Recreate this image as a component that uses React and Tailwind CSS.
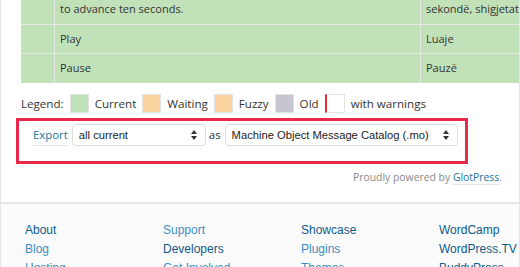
const rows = [
  { src: 'to advance ten seconds.', dst: 'sekondë, shigjetat', h: 'h-[29px]' },
  { src: 'Play', dst: 'Luaje', h: 'h-[28px]' },
  { src: 'Pause', dst: 'Pauzë', h: 'h-[29px]' },
];

const legend = [
  { label: 'Current', cls: 'bg-[#c1e1b9]' },
  { label: 'Waiting', cls: 'bg-[#fbd49f]' },
  { label: 'Fuzzy', cls: 'bg-[#fbd49f]' },
  { label: 'Old', cls: 'bg-[#c8c5d1]' },
];

const footer = [
  [['About', true], ['Blog', false], ['Hosting', false]],
  [['Support', false], ['Developers', true], ['Get Involved', false]],
  [['Showcase', true], ['Plugins', false], ['Themes', false]],
  [['WordCamp', true], ['WordPress.TV', true], ['BuddyPress', true]],
];

const Arrows = () => (
  <svg width="6" height="10" viewBox="0 0 6 10" className="shrink-0">
    <path d="M3 0L6 4H0Z" fill="#333" />
    <path d="M3 10L6 6H0Z" fill="#333" />
  </svg>
);

const Select = ({ value, width }) => (
  <div className={`${width} h-[22px] flex items-center justify-between pl-[6px] pr-[8px] bg-white border border-[#dcdcdc] rounded-[4px] font-['Liberation_Sans'] text-[11.2px] text-[#222]`}>
    <span>{value}</span>
    <Arrows />
  </div>
);

export default function App() {
  return (
    <div className="w-[520px] h-[267px] overflow-hidden bg-white border-x border-[#e5e5e5] font-['Open_Sans',sans-serif] text-[11px] text-[#333]">
      {/* Translation rows */}
      <div className="-mt-[5px] ml-[20px] flex flex-col gap-px bg-[#e6e9e5]">
        {rows.map((r) => (
          <div key={r.src} className={`${r.h} grid grid-cols-[33px_365px_1fr] gap-px`}>
            <div className="bg-[#c1e1b9]" />
            <div className="bg-[#c1e1b9] pl-[5px] flex items-center">{r.src}</div>
            <div className="bg-[#c1e1b9] pl-[5px] flex items-center whitespace-nowrap overflow-hidden">{r.dst}</div>
          </div>
        ))}
      </div>

      {/* Legend */}
      <div className="mt-[11px] ml-[20px] flex items-center gap-[6px] h-[19px] text-[11.6px]">
        <span>Legend:</span>
        {legend.map((l) => (
          <div key={l.label} className="flex items-center gap-[6px]">
            <span className={`w-[19px] h-[19px] border border-[#e2e2e2] ${l.cls}`} />
            <span>{l.label}</span>
          </div>
        ))}
        <span className="w-[20px] h-[19px] bg-white border border-[#e2e2e2] border-l-2 border-l-[#dc3232]" />
        <span>with warnings</span>
      </div>

      {/* Export */}
      <div className="mt-[5px] ml-[15px] w-[452px] border-[3px] border-[#e8294b] pt-[3px] pb-[15px] pl-[14px] flex items-center text-[11.4px]">
        <a className="text-[#21759b] border-b border-[#e3e3e3] leading-[21px]">Export</a>
        <div className="ml-[4px]">
          <Select value="all current" width="w-[134px]" />
        </div>
        <span className="ml-[3px] mr-[4px]">as</span>
        <Select value="Machine Object Message Catalog (.mo)" width="w-[233px]" />
      </div>

      <div className="mt-[5px] pr-[17px] text-right leading-[16px] text-[10.4px] text-[#8a8a8a]">
        Proudly powered by <a className="text-[#21759b] border-b border-[#e3e3e3]">GlotPress</a>.
      </div>

      <div className="mt-[17px] h-[2px] bg-[#e6e6e6]" />

      {/* Footer */}
      <div className="bg-[#fbfbfb] h-full pt-[17px] pl-[24px] flex font-['Liberation_Sans',sans-serif] text-[12px] leading-[19px]">
        {footer.map((col, i) => (
          <div key={i} className="w-[138px] shrink-0 flex flex-col">
            {col.map(([t, dark]) => (
              <a key={t} className={dark ? 'text-[#0e5a8a]' : 'text-[#3b8dc2]'}>{t}</a>
            ))}
          </div>
        ))}
      </div>
    </div>
  );
}
